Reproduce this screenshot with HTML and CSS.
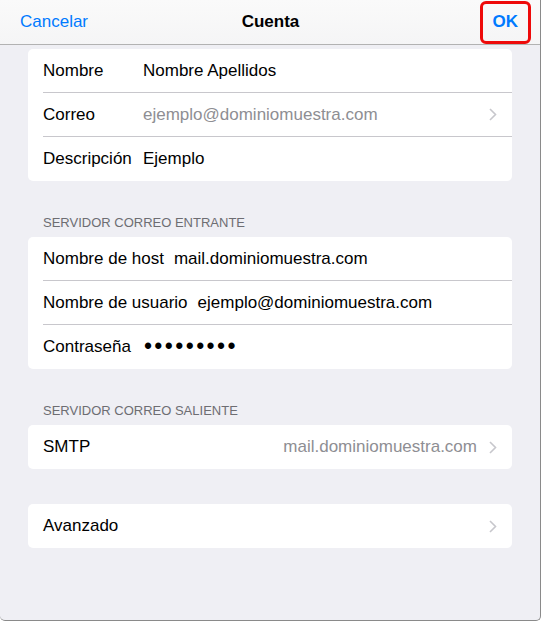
FILE: index.html
```html
<!DOCTYPE html>
<html lang="es">
  <head>
    <meta charset="UTF-8" />
    <meta name="viewport" content="width=device-width, initial-scale=1.0" />
    <title>Cuenta</title>
    <link rel="stylesheet" href="styles.css">
  </head>
  <body>
    <div class="sheet">
      <div class="navbar">
        <span class="nav_btn">Cancelar</span>
        <span class="nav_title">Cuenta</span>
        <span class="nav_btn nav_ok">OK</span>
      </div>

      <div class="content">
        <div class="group">
          <div class="row">
            <span class="label label_main">Nombre</span>
            <span class="value">Nombre Apellidos</span>
          </div>
          <div class="row">
            <span class="label label_main">Correo</span>
            <span class="value muted">ejemplo@dominiomuestra.com</span>
            <svg class="chevron" width="8" height="13" viewBox="0 0 8 13">
              <polyline points="1,1 6.5,6.5 1,12" fill="none" stroke="#c7c7cc" stroke-width="1.6" />
            </svg>
          </div>
          <div class="row">
            <span class="label label_main">Descripción</span>
            <span class="value">Ejemplo</span>
          </div>
        </div>

        <div class="section_title">SERVIDOR CORREO ENTRANTE</div>
        <div class="group">
          <div class="row">
            <span class="label">Nombre de host</span>
            <span class="value">mail.dominiomuestra.com</span>
          </div>
          <div class="row">
            <span class="label">Nombre de usuario</span>
            <span class="value">ejemplo@dominiomuestra.com</span>
          </div>
          <div class="row">
            <span class="label">Contraseña</span>
            <span class="value dots">•••••••••</span>
          </div>
        </div>

        <div class="section_title">SERVIDOR CORREO SALIENTE</div>
        <div class="group">
          <div class="row">
            <span class="label">SMTP</span>
            <span class="value muted right">mail.dominiomuestra.com</span>
            <svg class="chevron" width="8" height="13" viewBox="0 0 8 13">
              <polyline points="1,1 6.5,6.5 1,12" fill="none" stroke="#c7c7cc" stroke-width="1.6" />
            </svg>
          </div>
        </div>

        <div class="group group_spaced">
          <div class="row">
            <span class="label">Avanzado</span>
            <span class="value"></span>
            <svg class="chevron" width="8" height="13" viewBox="0 0 8 13">
              <polyline points="1,1 6.5,6.5 1,12" fill="none" stroke="#c7c7cc" stroke-width="1.6" />
            </svg>
          </div>
        </div>
      </div>
    </div>
  </body>
</html>
```

FILE: styles.css
```css
body {
  margin: 0;
  background-color: #ffffff;
  font-family: "Liberation Sans", Arial, sans-serif;
}

.sheet {
  width: 540px;
  height: 620px;
  background-color: #efeff4;
  border-right: 1px solid #8a8a8a;
  border-bottom: 1px solid #8a8a8a;
  border-radius: 0 0 5px 5px;
  overflow: hidden;
}

/* top bar: cancel / title / ok */
.navbar {
  height: 44px;
  display: grid;
  grid-template-columns: 1fr auto 1fr;
  align-items: center;
  padding: 0 9px 0 20px;
  background: linear-gradient(#fafafa, #f5f5f6);
  border-bottom: 1px solid #b2b2b2;
}

.nav_btn {
  font-size: 17px;
  color: #007aff;
}

.nav_title {
  font-size: 17px;
  font-weight: 700;
  color: #000;
  margin-left: -10px;
}

.nav_ok {
  justify-self: end;
  font-weight: 700;
  padding: 8px 10px 9px 10px;
  border: 3px solid #ee0a0a;
  border-radius: 6px;
}

.content {
  padding: 4px 28px 0 28px;
}

.group {
  background-color: #ffffff;
  border-radius: 5px;
  padding-left: 15px;
}

.group_spaced {
  margin-top: 35px;
}

.row {
  height: 44px;
  box-sizing: border-box;
  display: flex;
  align-items: center;
  font-size: 17px;
  color: #000;
  padding-right: 15px;
  border-bottom: 1px solid #c8c7cc;
}

.row:last-child {
  border-bottom: none;
}

.label {
  margin-right: 10px;
}

.label_main {
  width: 100px;
  margin-right: 0;
}

.value {
  flex: 1;
}

.muted {
  color: #8e8e93;
}

.right {
  text-align: right;
  margin-right: 4px;
}

.dots {
  font-size: 23px;
  letter-spacing: 2.4px;
  margin-left: 3px;
  margin-top: -2px;
}

.chevron {
  margin-left: 8px;
}

.section_title {
  font-size: 13px;
  color: #6d6d72;
  padding: 34px 0 7px 15px;
}
```
